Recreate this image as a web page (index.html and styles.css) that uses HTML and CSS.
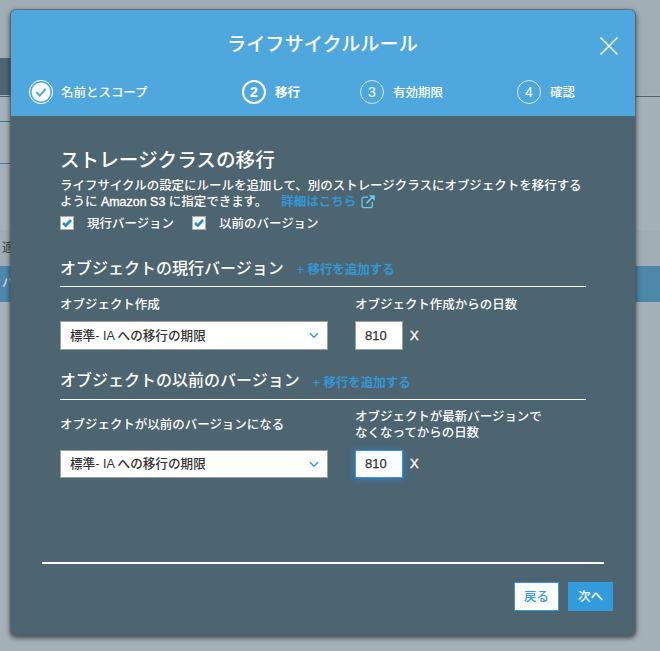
FILE: index.html
```
<!DOCTYPE html>
<html lang="ja">
<head>
<meta charset="utf-8">
<title>ライフサイクルルール</title>
<link rel="stylesheet" href="styles.css">
</head>
<body>
<div class="page">
  <div class="page-top"></div>
  <div class="page-nav"></div>
  <div class="page-tabs"></div>
  <div class="page-panel"></div>
  <div class="page-blank"></div>
  <div class="page-head">適</div>
  <div class="page-row">バ</div>
</div>
<main class="modal">
  <header class="modal-header">
    <div class="title-row">
      <h1 class="title">ライフサイクルルール</h1>
      <svg class="close" viewBox="0 0 20 20"><path d="M1.5 1.5 18.5 18.5M18.5 1.5 1.5 18.5"/></svg>
    </div>
    <ol class="steps">
      <li class="step step-one">
        <svg class="badge" viewBox="0 0 26 26"><circle cx="13" cy="13" r="11.6" class="ring"/><circle cx="13" cy="13" r="9.4" class="disc"/><path d="M8.2 13.2 11.7 16.6 17.6 9.8" class="tick"/></svg>
        <span>名前とスコープ</span>
      </li>
      <li class="step step-two"><span class="number">2</span><span>移行</span></li>
      <li class="step step-three"><span class="number">3</span><span>有効期限</span></li>
      <li class="step step-four"><span class="number">4</span><span>確認</span></li>
    </ol>
  </header>
  <section class="content">
    <h2 class="heading">ストレージクラスの移行</h2>
    <p class="description">ライフサイクルの設定にルールを追加して、別のストレージクラスにオブジェクトを移行する<br>ように <span class="latin">Amazon S3</span> に指定できます。<a class="link more">詳細はこちら<svg class="external" viewBox="0 0 14 14"><path d="M7 2.2H3Q1 2.2 1 4.2V10.7Q1 12.7 3 12.7H9.3Q11.3 12.7 11.3 10.7V7"/><path class="shaft" d="M5.5 8.2 11.5 2.2"/><path class="tip" d="M7.7.2H13.8V6Z"/></svg></a></p>
    <div class="checks">
      <label class="check"><span class="box"><svg viewBox="0 0 10 10"><path d="M1 5 3.8 7.7 9 2"/></svg></span>現行バージョン</label>
      <label class="check"><span class="box"><svg viewBox="0 0 10 10"><path d="M1 5 3.8 7.7 9 2"/></svg></span>以前のバージョン</label>
    </div>
    <div class="group-title"><h3>オブジェクトの現行バージョン</h3><a class="link">+ 移行を追加する</a></div>
    <div class="labels"><span>オブジェクト作成</span><span>オブジェクト作成からの日数</span></div>
    <div class="fields">
      <div class="select"><span>標準- IA への移行の期限</span><svg viewBox="0 0 10 7"><path d="M1 1.2 5 5.2 9 1.2"/></svg></div>
      <div class="days">810</div><span class="remove">X</span>
    </div>
    <div class="group-title second"><h3>オブジェクトの以前のバージョン</h3><a class="link">+ 移行を追加する</a></div>
    <div class="labels tall"><span>オブジェクトが以前のバージョンになる</span><span>オブジェクトが最新バージョンで<br>なくなってからの日数</span></div>
    <div class="fields low">
      <div class="select"><span>標準- IA への移行の期限</span><svg viewBox="0 0 10 7"><path d="M1 1.2 5 5.2 9 1.2"/></svg></div>
      <div class="days focused">810</div><span class="remove">X</span>
    </div>
  </section>
  <footer class="footer">
    <div class="button back">戻る</div>
    <div class="button next">次へ</div>
  </footer>
</main>
</body>
</html>
```
FILE: styles.css
```
* { box-sizing: border-box; }
body {
  margin: 0;
  width: 660px;
  height: 651px;
  overflow: hidden;
  background: #a5b1b9;
  color: #fff;
  font: 500 12.47px/16px "Liberation Sans", "Noto Sans CJK JP", sans-serif;
}
h1, h2, h3, p, ol { margin: 0; padding: 0; }
h1, h2, h3 { font-weight: 500; white-space: nowrap; }
svg { fill: none; flex: none; }

.page-top { height: 58px; background: #a1adb5; }
.page-nav { height: 37px; background: linear-gradient(90deg, #4d6572 11px, #a1adb5 11px); }
.page-tabs { height: 26px; margin-top: 1px; border-top: 1px solid #4d6572; background: linear-gradient(90deg, #347ba5 11px, transparent 11px) 0 100% / 100% 1px no-repeat; }
.page-panel { height: 42px; background: linear-gradient(90deg, #347ba5 11px, transparent 11px) 0 100% / 100% 1px no-repeat; }
.page-blank { height: 66px; }
.page-head { height: 36px; padding: 9px 2px; background: #a1adb5; color: #4a5359; line-height: 18px; }
.page-row { height: 36px; padding: 8px 2px; background: #4d87aa; color: #ccd9e2; line-height: 18px; }

.modal {
  position: absolute;
  left: 11px;
  top: 10px;
  width: 624px;
  height: 625px;
  display: flex;
  flex-direction: column;
  border-radius: 5px;
  overflow: hidden;
  background: #4d6471;
  box-shadow: 0 0 0 1px rgba(90, 96, 100, .65), 0 2px 5px 1px rgba(0, 0, 0, .6);
}
.modal-header { height: 106px; background: #4ea8dd; }
.title-row { height: 69px; display: flex; padding: 22px 16px 0 0; }
.title { flex: 1; padding-left: 216px; font-size: 19.2px; line-height: 25px; }
.close { width: 20px; height: 20px; margin-top: 4px; stroke: #fff; stroke-width: 1.5; }
.steps { display: flex; list-style: none; }
.step { display: flex; align-items: center; height: 26px; gap: 9px; }
.step span:last-child { padding-top: 2px; }
.step-one { width: 231px; padding-left: 17px; gap: 7px; }
.step-two { width: 118px; font-weight: 700; }
.step-three { width: 157px; }
.badge { width: 26px; height: 26px; }
.ring { stroke: #fff; stroke-width: 1; }
.disc { fill: #fff; }
.tick { stroke: #4ea8dd; stroke-width: 2; }
.number { width: 24px; height: 24px; border: 1px solid #d3eaf7; border-radius: 50%; text-align: center; font: 14px/23px "Liberation Sans", sans-serif; }
.step-two .number { border: 2px solid #fff; font-weight: 700; line-height: 21px; }

.content { flex: 1; padding: 32px 49px 0; }
.heading { height: 30px; font-size: 19.6px; line-height: 24px; }
.description { height: 33px; white-space: nowrap; }
.latin { font-weight: 400; -webkit-text-stroke: .35px #fff; }
.link { color: #329ad6; -webkit-text-stroke: .25px #329ad6; }
.more { display: inline-flex; align-items: center; gap: 5px; margin-left: 14px; }
.external { width: 14px; height: 14px; stroke: #65cbe6; stroke-width: 1.3; }
.external .shaft { stroke-width: 1.8; }
.external .tip { fill: #65cbe6; stroke: none; }
.checks { display: flex; gap: 18px; height: 29px; padding-top: 5px; }
.check { display: flex; align-items: center; gap: 13px; height: 16px; }
.box { width: 14px; height: 14px; padding: 1px; border: 1px solid #a9adb0; background: #fff; margin-top: -2px; }
.box svg { display: block; width: 10px; height: 10px; stroke: #2589cb; stroke-width: 2.6; }
.group-title { display: flex; align-items: center; gap: 13px; height: 47px; padding: 19px 0 8px; border-bottom: 1px solid #fff; }
.group-title h3 { font-size: 16px; line-height: 20px; }
.group-title .link { padding-top: 3px; }
.labels { display: grid; grid-template-columns: 295px 1fr; height: 34px; padding-top: 10px; }
.fields { display: flex; align-items: center; height: 29px; }
.select, .days { height: 100%; display: flex; align-items: center; border: 1px solid #9b9fa2; background: #fff; color: #333; }
.select { width: 268px; justify-content: space-between; padding: 0 8px 0 9px; font-size: 12.6px; }
.select svg { width: 10px; height: 7px; stroke: #329ad6; stroke-width: 1.4; }
.days { width: 48px; margin: 0 7px 0 27px; padding-left: 9px; font-size: 13px; -webkit-text-stroke: .25px #333; }
.focused { border-color: #2d98dc; box-shadow: 0 1px 7px rgba(45, 140, 215, .8); }
.remove { font-size: 13px; font-weight: 400; -webkit-text-stroke: .4px #fff; }
.second { height: 50px; padding-top: 21px; }
.labels.tall { height: 50px; padding-top: 9px; }
.labels.tall span:first-child { padding-top: 8px; }
.low { height: 28px; }

.footer { display: flex; justify-content: flex-end; gap: 9px; width: 562px; height: 73px; margin-left: 31px; padding-top: 18px; border-top: 2px solid #fff; }
.button { flex: none; width: 45px; height: 29px; border: 1px solid #329bdb; text-align: center; line-height: 29px; }
.back { background: #fff; color: #329bdb; }
.next { background: #329bdb; margin-right: -9px; }
```
